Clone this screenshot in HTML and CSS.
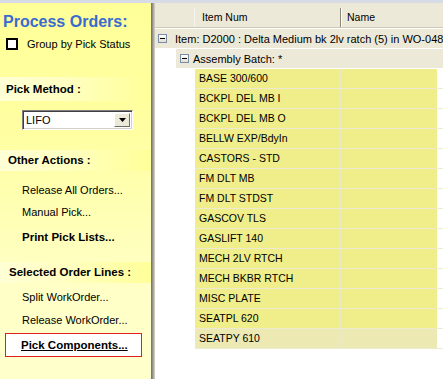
FILE: index.html
```html
<!DOCTYPE html>
<html lang="en">
<head>
  <meta charset="UTF-8" />
  <title>Process Orders</title>
  <link rel="stylesheet" href="styles.css">
</head>
<body>
  <div class="topbar"></div>
  <div class="main">
    <aside class="side">
      <h1 class="title">Process Orders:</h1>
      <label class="check"><span class="box"></span>Group by Pick Status</label>

      <div class="band band-pick">Pick Method :</div>
      <div class="select">
        <span class="select-val">LIFO</span>
        <span class="select-btn">
          <svg width="7" height="4" viewBox="0 0 7 4"><path d="M0 0h7L3.5 4z" fill="#000"/></svg>
        </span>
      </div>

      <div class="band band-other">Other Actions :</div>
      <div class="link l-release-all">Release All Orders...</div>
      <div class="link l-manual">Manual Pick...</div>
      <div class="link link-bold l-print">Print Pick Lists...</div>

      <div class="band band-selected">Selected Order Lines :</div>
      <div class="link l-split">Split WorkOrder...</div>
      <div class="link l-release-wo">Release WorkOrder...</div>
      <div class="link link-bold pick-box">Pick Components...</div>
    </aside>

    <div class="splitter"></div>

    <section class="grid">
      <div class="grid-top">
        <div class="head">
          <div class="hc hc0"></div>
          <div class="hc hc1">Item Num</div>
          <div class="hc hc2">Name</div>
        </div>
      </div>
      <div class="row-item"><span class="minus"></span>Item: D2000 : Delta Medium bk 2lv ratch (5) in WO-0487</div>
      <div class="row-batch"><span class="minus"></span>Assembly Batch: *</div>
      <div class="rows">
        <div class="row"><div class="c1">BASE 300/600</div><div class="c2"></div></div>
        <div class="row"><div class="c1">BCKPL DEL MB I</div><div class="c2"></div></div>
        <div class="row"><div class="c1">BCKPL DEL MB O</div><div class="c2"></div></div>
        <div class="row"><div class="c1">BELLW EXP/BdyIn</div><div class="c2"></div></div>
        <div class="row"><div class="c1">CASTORS - STD</div><div class="c2"></div></div>
        <div class="row"><div class="c1">FM DLT MB</div><div class="c2"></div></div>
        <div class="row"><div class="c1">FM DLT STDST</div><div class="c2"></div></div>
        <div class="row"><div class="c1">GASCOV TLS</div><div class="c2"></div></div>
        <div class="row"><div class="c1">GASLIFT 140</div><div class="c2"></div></div>
        <div class="row"><div class="c1">MECH 2LV RTCH</div><div class="c2"></div></div>
        <div class="row"><div class="c1">MECH BKBR RTCH</div><div class="c2"></div></div>
        <div class="row"><div class="c1">MISC PLATE</div><div class="c2"></div></div>
        <div class="row"><div class="c1">SEATPL 620</div><div class="c2"></div></div>
        <div class="row row-last"><div class="c1">SEATPY 610</div><div class="c2"></div></div>
      </div>
    </section>
  </div>
</body>
</html>
```

FILE: styles.css
```css
* { box-sizing: border-box; margin: 0; padding: 0; }
html, body { width: 443px; height: 379px; overflow: hidden; }
body {
  font-family: 'Liberation Sans', Arial, sans-serif;
  font-size: 11px;
  color: #000;
  background: #fff;
}
.topbar {
  height: 3px;
  background: #d7dbe6;
}
.main {
  display: flex;
  height: 376px;
}

/* left task pane */
.side {
  width: 151px;
  flex: none;
  display: flex;
  flex-direction: column;
  background: linear-gradient(to bottom, #ffff99 0%, #ffffa2 35%, #ffffc6 75%, #ffffcc 100%);
}
.title {
  margin: 10px 0 0 3px;
  font-size: 16px;
  font-weight: bold;
  line-height: 18px;
  color: #3a6bd0;
}
.check {
  display: flex;
  align-items: center;
  height: 16px;
  margin: 5px 0 0 6px;
  line-height: 16px;
}
.check .box {
  width: 12px; height: 12px;
  border: 2px solid #000;
  background: #fff;
  margin-right: 9px;
}
.band {
  padding-left: 7px;
  font-weight: bold;
  font-size: 11.5px;
  background: linear-gradient(to right, #ffffd6 0%, #ffffc0 45%, #ffff99 100%);
}
.band-pick { margin-top: 25px; height: 24px; line-height: 24px; padding-left: 6px; }
.band-other { margin-top: 20px; height: 21px; line-height: 21px; padding-left: 8px; }
.band-selected { margin-top: 15px; height: 21px; line-height: 21px; padding-left: 9px; }

.select {
  display: flex;
  margin: 9px 0 0 22px;
  width: 111px;
  height: 20px;
  background: #fff;
  border-top: 1px solid #808080;
  border-left: 1px solid #808080;
  border-bottom: 1px solid #fff;
  border-right: 1px solid #fff;
  box-shadow: inset 1px 1px 0 #404040, inset -1px -1px 0 #d4d0c8;
  padding: 2px;
}
.select-val {
  flex: 1;
  line-height: 14px;
  padding-left: 1px;
}
.select-btn {
  width: 16px;
  height: 14px;
  display: flex;
  align-items: center;
  justify-content: center;
  background: #ece9d8;
  border-top: 1px solid #fff;
  border-left: 1px solid #fff;
  border-right: 1px solid #716f64;
  border-bottom: 1px solid #716f64;
}

.link {
  height: 20px;
  line-height: 20px;
  padding-left: 22px;
}
.link-bold { font-weight: bold; font-size: 11.5px; }
.l-release-all { margin-top: 9px; }
.l-manual { margin-top: 2px; }
.l-print { margin-top: 5px; }
.l-split { margin-top: 4px; }
.l-release-wo { margin-top: 3px; }
.pick-box {
  margin: 3px 0 0 5px;
  width: 137px;
  height: 24px;
  line-height: 22px;
  padding-left: 15px;
  background: #fff;
  border: 1px solid #e0201c;
  text-decoration: underline;
}

.splitter {
  width: 4px;
  flex: none;
  background: linear-gradient(to right, #6e6e6a, #8e8c84, #b4b2a8, #d8d4c8);
}

/* grid */
.grid {
  flex: 1;
  overflow: hidden;
  background: #fff;
  font-size: 10.5px;
}
.grid-top {
  height: 26px;
  padding-top: 5px;
  background: #ece9d8;
  border-bottom: 1px solid #fff;
}
.head {
  display: flex;
  height: 20px;
  border-bottom: 1px solid #cdc9b9;
}
.hc {
  line-height: 19px;
  padding-left: 7px;
}
.hc0 { width: 40px; border-right: 1px solid #f4f3ee; }
.hc1 { width: 146px; border-right: 1px solid #8a877a; }
.hc2 { width: 96px; border-left: 1px solid #fff; padding-left: 5px; }

.minus {
  position: relative;
  width: 9px;
  height: 9px;
  flex: none;
  border: 1px solid #7a8ca6;
  background: linear-gradient(#ffffff, #e2ded2);
}
.minus::after {
  content: '';
  position: absolute;
  left: 1px; top: 3px;
  width: 5px; height: 1px;
  background: #000;
}
.row-item {
  display: flex;
  align-items: center;
  height: 20px;
  padding-left: 3px;
  font-size: 11px;
  background: #ece9d8;
  border-bottom: 1px solid #fff;
  white-space: nowrap;
}
.row-item .minus { margin-right: 8px; }
.row-batch {
  display: flex;
  align-items: center;
  height: 20px;
  margin-left: 21px;
  padding-left: 4px;
  font-size: 11px;
  background: #ece9d8;
  border-bottom: 1px solid #fff;
}
.row-batch .minus { margin-right: 4px; }

.rows { margin-left: 40px; }
.row {
  display: flex;
  height: 20px;
  border-bottom: 1px solid #ecebd2;
}
.row .c1, .row .c2 {
  background: #f0ee8a;
  line-height: 19px;
}
.row .c1 {
  width: 146px;
  padding-left: 4px;
  border-right: 1px solid #e9e8c8;
}
.row .c2 { width: 96px; }
.row-last .c1, .row-last .c2 { background: #ede9b2; }
```
